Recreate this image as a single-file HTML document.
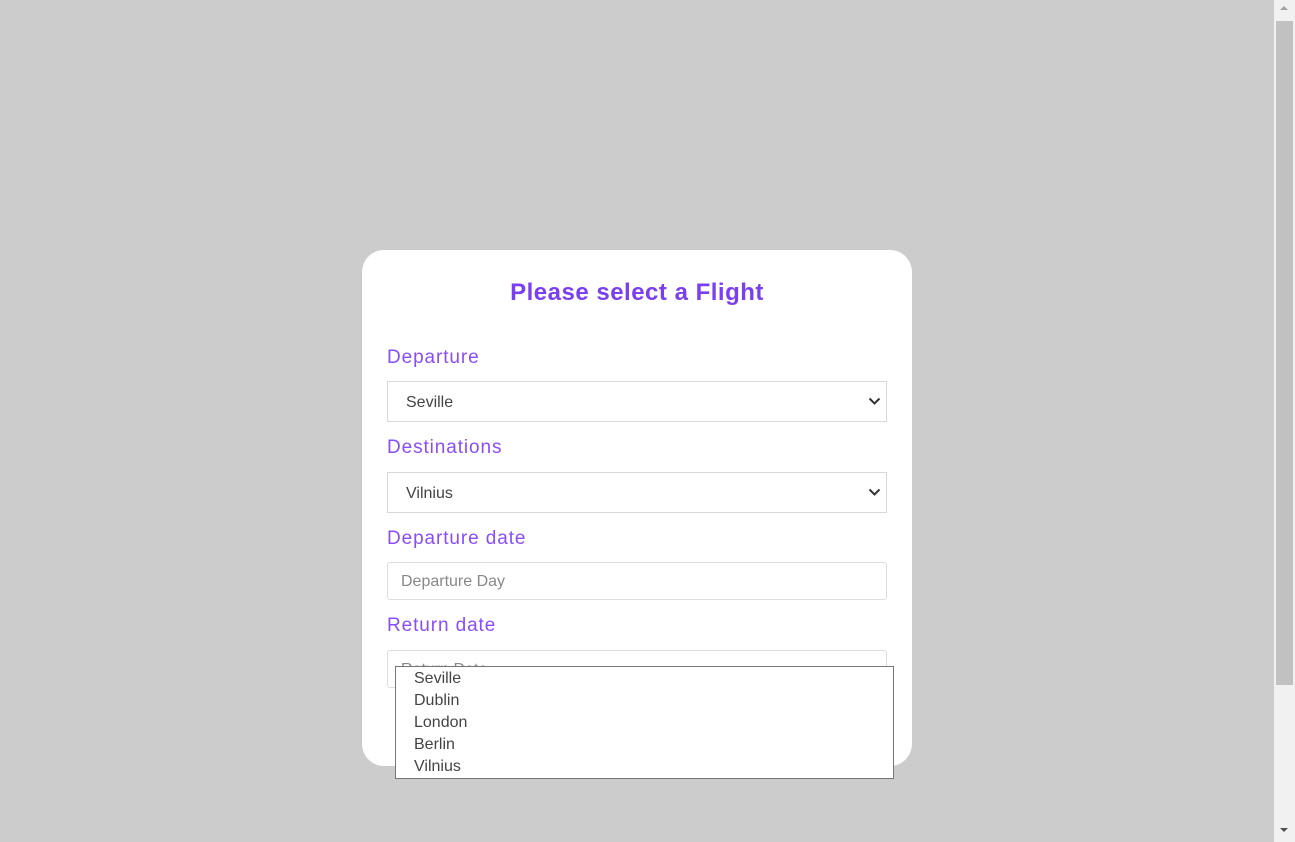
<!DOCTYPE html>
<html><head><meta charset="utf-8"><style>
*{box-sizing:border-box;margin:0;padding:0}
body{width:1295px;height:842px;background:#cccccc;font-family:"Liberation Sans",sans-serif;position:relative;overflow:hidden}
.card{position:absolute;left:362px;top:250px;width:550px;height:516px;background:#fff;border-radius:22px}
.t{position:absolute;width:550px;top:279px;text-align:center;color:#7b3ff2;font-weight:bold;font-size:24px;letter-spacing:0.5px}
.l{position:absolute;left:387px;color:#8a4dfb;font-size:19px;letter-spacing:0.9px}
.s{position:absolute;left:387px;width:500px;height:41px;border:1px solid #d9d9d9;background:#fff;color:#444;font-size:16px;padding-left:18px;line-height:41px}
.i{position:absolute;left:387px;width:500px;height:38px;border:1px solid #ddd;border-radius:3px;background:#fff;color:#888;font-size:16px;padding-left:13px;line-height:38px}
.chev{position:absolute;right:5px;top:14px}
.dd{position:absolute;left:395px;top:666px;width:499px;height:113px;border:1px solid #767676;background:#fff;color:#444;font-size:16px;padding-left:18px;padding-top:1px}
.dd div{height:22px;line-height:22px}
.sb{position:absolute;left:1274px;top:0;width:21px;height:842px;background:#f1f1f1}
.th{position:absolute;left:1276px;top:21px;width:17px;height:664px;background:#c1c1c1}
</style></head><body>
<div class="card"></div>
<div class="t" style="left:362px">Please select a Flight</div>
<div class="l" style="top:347px">Departure</div>
<div class="s" style="top:381px">Seville<svg class="chev" width="13" height="10" viewBox="0 0 13 10"><path d="M1.5 2.5l5 5 5-5" stroke="#333" stroke-width="2" fill="none"/></svg></div>
<div class="l" style="top:437px">Destinations</div>
<div class="s" style="top:472px">Vilnius<svg class="chev" width="13" height="10" viewBox="0 0 13 10"><path d="M1.5 2.5l5 5 5-5" stroke="#333" stroke-width="2" fill="none"/></svg></div>
<div class="l" style="top:528px">Departure date</div>
<div class="i" style="top:562px">Departure Day</div>
<div class="l" style="top:615px">Return date</div>
<div class="i" style="top:650px">Return Date</div>
<div class="dd"><div>Seville</div><div>Dublin</div><div>London</div><div>Berlin</div><div>Vilnius</div></div>
<div class="sb"></div><div class="th"></div>
<svg style="position:absolute;left:1279px;top:5px" width="10" height="6"><path d="M1 5L5 1 9 5Z" fill="#a3a3a3"/></svg>
<svg style="position:absolute;left:1279px;top:827px" width="10" height="6"><path d="M1 1L5 5 9 1Z" fill="#505050"/></svg>
</body></html>
